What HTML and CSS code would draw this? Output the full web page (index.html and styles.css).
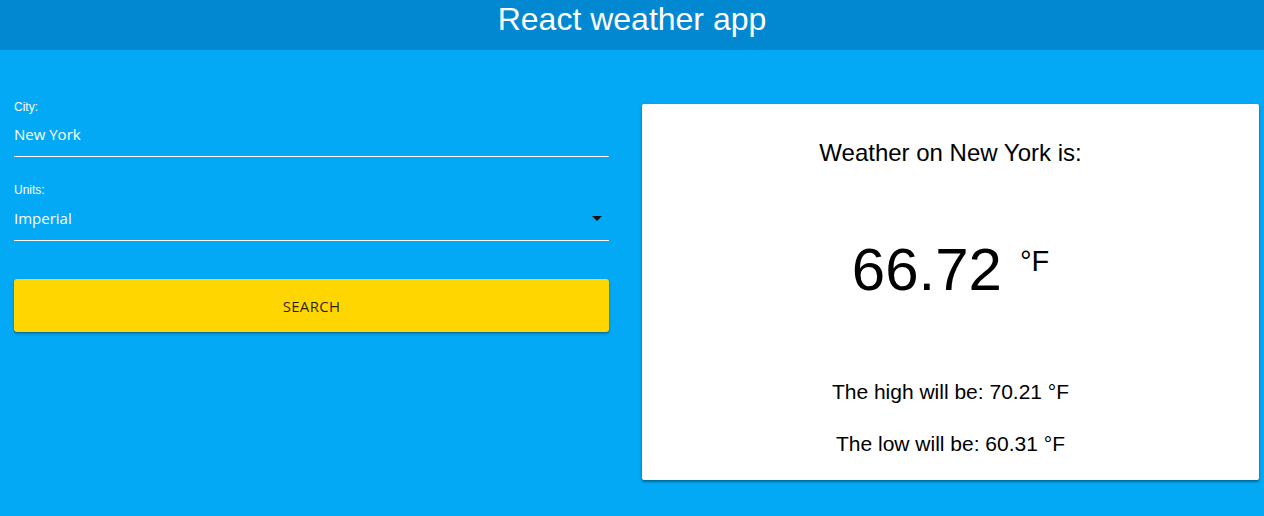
FILE: index.html
```html
<!DOCTYPE html>
<html lang="en">
<head>
<meta charset="utf-8">
<title>React weather app</title>
<link rel="stylesheet" href="styles.css">
</head>
<body>
<header class="app-bar">
  <h1 class="app-title">React weather app</h1>
</header>
<main class="main">
  <form class="search-form">
    <div class="field">
      <label class="field-label">City:</label>
      <div class="field-input">New York</div>
    </div>
    <div class="field field-units">
      <label class="field-label">Units:</label>
      <div class="field-input field-select">
        <span>Imperial</span>
        <svg class="select-arrow" width="24" height="24" viewBox="0 0 24 24"><path d="M7 10l5 5 5-5z"/></svg>
      </div>
    </div>
    <button type="button" class="search-button">Search</button>
  </form>
  <section class="weather-card">
    <h2 class="weather-heading">Weather on New York is:</h2>
    <div class="weather-temp"><span class="temp-value">66.72</span><span class="temp-unit">°F</span></div>
    <p class="weather-line weather-high">The high will be: 70.21 °F</p>
    <p class="weather-line weather-low">The low will be: 60.31 °F</p>
  </section>
</main>
</body>
</html>
```

FILE: styles.css
```css
html, body {
  margin: 0;
  padding: 0;
}
body {
  background: #03A9F4;
  font-family: "Liberation Sans", Arial, sans-serif;
  width: 1264px;
  height: 516px;
  overflow: hidden;
}
.app-bar {
  height: 50px;
  background: #0288D1;
  text-align: center;
  color: #fff;
}
.app-title {
  margin: 0;
  font-weight: 400;
  font-size: 32px;
  line-height: 38px;
}
.main {
  display: grid;
  grid-template-columns: 595px 617px;
  column-gap: 33px;
  align-items: start;
  padding: 50px 5px 0 14px;
}
.search-form {
  display: flex;
  flex-direction: column;
  margin: 0;
}
.field {
  display: flex;
  flex-direction: column;
  color: #fff;
}
.field-units {
  margin-top: 26px;
}
.field-label {
  font-size: 12px;
  line-height: 14px;
  color: #fff;
}
.field-input {
  margin-top: 10px;
  font-family: "Open Sans", sans-serif;
  font-size: 15px;
  line-height: 20px;
  padding-bottom: 12px;
  border-bottom: 1px solid #fff;
}
.field-select {
  display: flex;
  align-items: center;
  justify-content: space-between;
  height: 20px;
  margin-top: 11px;
}
.select-arrow {
  fill: #111;
  flex: none;
}
.search-button {
  margin-top: 38px;
  height: 53px;
  border: 0;
  border-radius: 3px;
  background: #FFD600;
  color: rgba(0, 0, 0, 0.85);
  font-family: "Open Sans", sans-serif;
  font-size: 15px;
  letter-spacing: 0.3px;
  text-transform: uppercase;
  box-shadow: 0 2px 3px rgba(0, 0, 0, 0.25), 0 1px 1px rgba(0, 0, 0, 0.14);
  padding: 0;
}
.weather-card {
  margin-top: 4px;
  background: #fff;
  border-radius: 2px;
  box-shadow: 0 2px 2px rgba(0, 0, 0, 0.3), 0 1px 4px rgba(0, 0, 0, 0.12);
  text-align: center;
  color: #000;
  padding: 35px 0 24px;
  display: flex;
  flex-direction: column;
}
.weather-heading {
  margin: 0;
  font-weight: 400;
  font-size: 24px;
  line-height: 28px;
}
.weather-temp {
  margin-top: 59px;
  font-size: 60px;
  line-height: 70px;
}
.temp-unit {
  font-size: 29px;
  margin-left: 18px;
  vertical-align: 19px;
}
.weather-line {
  margin: 0;
  font-size: 21px;
  line-height: 24px;
}
.weather-high {
  margin-top: 75px;
}
.weather-low {
  margin-top: 28px;
}
```
